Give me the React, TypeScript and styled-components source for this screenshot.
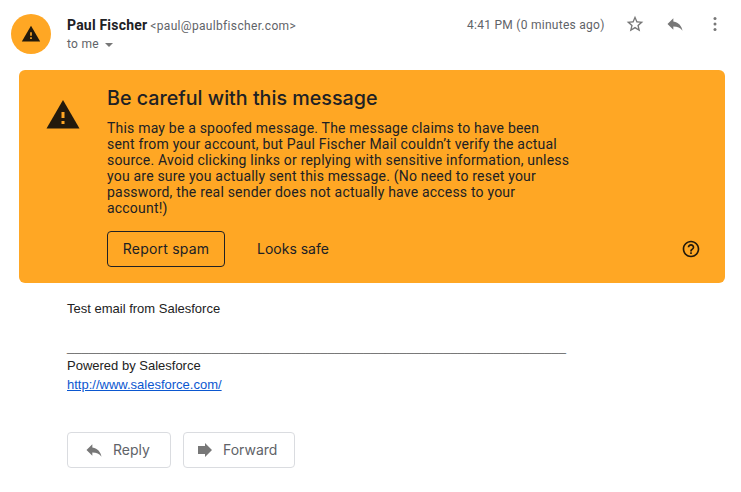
import styled, { createGlobalStyle } from 'styled-components';

const GlobalStyle = createGlobalStyle`
    html, body {
        margin: 0;
        background: #ffffff;
    }
`;

const Page = styled.div`
    width: 741px;
    height: 492px;
    overflow: hidden;
    padding-top: 14px;
    box-sizing: border-box;
    font-family: Roboto, 'Liberation Sans', sans-serif;
`;

const Header = styled.header`
    display: flex;
    height: 56px;
    padding-left: 11px;
`;

const Avatar = styled.div`
    width: 40px;
    height: 40px;
    border-radius: 50%;
    background: #ffa724;
    display: flex;
    align-items: center;
    justify-content: center;
    flex-shrink: 0;
`;

const Sender = styled.div`
    margin-left: 16px;
    width: 384px;
    padding-top: 2px;
`;

const SenderLine = styled.div`
    height: 18px;
    line-height: 18px;
    white-space: nowrap;
`;

const Name = styled.span`
    font-size: 14px;
    font-weight: 700;
    letter-spacing: 0.2px;
    color: #202124;
    margin-right: 3px;
`;

const Address = styled.span`
    font-size: 12px;
    letter-spacing: 0.33px;
    color: #5f6368;
`;

const ToLine = styled.div`
    display: flex;
    align-items: center;
    margin-top: 2px;
    height: 16px;
    font-size: 12px;
    letter-spacing: 0.3px;
    color: #5f6368;
`;

const Caret = styled.span`
    width: 0;
    height: 0;
    margin-left: 6px;
    margin-top: 1px;
    border-left: 4px solid transparent;
    border-right: 4px solid transparent;
    border-top: 4px solid #777777;
`;

const Meta = styled.div`
    margin-left: 16px;
    width: 148px;
    padding-top: 2px;
    font-size: 12px;
    letter-spacing: 0.27px;
    line-height: 18px;
    color: #5f6368;
    white-space: nowrap;
`;

const HeaderIcons = styled.div`
    display: flex;
    align-items: flex-start;
`;

const HeaderIcon = styled.div`
    width: 40px;
    height: 20px;
    display: flex;
    align-items: center;
    justify-content: center;
`;

const Banner = styled.section`
    margin-left: 19px;
    width: 706px;
    height: 213px;
    box-sizing: border-box;
    border-radius: 6px;
    background: #ffa724;
    display: flex;
    padding-top: 15px;
    color: #202124;
`;

const BannerIcon = styled.div`
    width: 88px;
    padding: 12px 0 0 26px;
    box-sizing: border-box;
    flex-shrink: 0;
`;

const BannerMain = styled.div`
    flex: 1;
    padding-right: 24px;
`;

const Title = styled.h2`
    margin: 0;
    font-family: 'Inter', sans-serif;
    font-size: 19.7px;
    font-weight: 500;
    line-height: 26px;
    color: #202124;
`;

const Message = styled.p`
    margin: 9px 0 0;
    font-size: 14px;
    letter-spacing: 0.2px;
    line-height: 16px;
    width: 463px;
    color: #202124;
`;

const BannerActions = styled.div`
    display: flex;
    align-items: center;
    margin-top: 15px;
`;

const SpamButton = styled.button`
    width: 118px;
    height: 36px;
    box-sizing: border-box;
    border: 1px solid #202124;
    border-radius: 4px;
    background: transparent;
    font-family: 'Inter', sans-serif;
    font-size: 14px;
    letter-spacing: 0.2px;
    color: #202124;
    padding: 0 0 1px;
`;

const SafeButton = styled.button`
    margin-left: 32px;
    border: 0;
    padding: 0 0 1px;
    background: transparent;
    font-family: 'Inter', sans-serif;
    font-size: 14px;
    color: #202124;
`;

const HelpIcon = styled.svg`
    display: block;
    margin-left: auto;
`;

const Body = styled.div`
    margin-left: 67px;
    padding-top: 18px;
    font-family: 'Liberation Sans', Arial, sans-serif;
    font-size: 13px;
    line-height: 15px;
    color: #222222;
`;

const Rule = styled.div`
    margin-top: 23px;
    color: #666666;
    white-space: nowrap;
`;

const Line = styled.div`
    margin-top: 4px;
`;

const SiteLink = styled.a`
    color: #0b57d0;
    text-decoration: underline;
`;

const Actions = styled.div`
    display: flex;
    gap: 12px;
    margin: 40px 0 0 67px;
`;

const ActionButton = styled.button<{ $wide?: boolean }>`
    display: flex;
    align-items: center;
    width: ${(p) => (p.$wide ? '112px' : '104px')};
    height: 36px;
    box-sizing: border-box;
    padding: 0 0 0 ${(p) => (p.$wide ? '12px' : '16px')};
    border: 1px solid #dadce0;
    border-radius: 4px;
    background: #ffffff;
    font-family: 'Inter', sans-serif;
    font-size: 14px;
    color: #5f6368;
`;

const ActionLabel = styled.span<{ $gap: number }>`
    margin-left: ${(p) => p.$gap}px;
    padding-bottom: 1px;
`;

const WarningIcon = ({ size }: { size: number }) => (
    <svg width={size} height={size} viewBox="0 0 24 24">
        <path d="M1 21h22L12 2 1 21z" fill="#231a0c" />
        <path d="M11 10h2v4h-2zM11 16h2v2h-2z" fill="#ffa724" />
    </svg>
);

const ReplyIcon = ({ size }: { size: number }) => (
    <svg width={size} height={size} viewBox="0 0 24 24">
        <path d="M10 9V5l-7 7 7 7v-4.1c5 0 8.5 1.6 11 5.1-1-5-4-10-11-11z" fill="#777777" />
    </svg>
);

const App = () => (
    <Page>
        <GlobalStyle />
        <Header>
            <Avatar>
                <WarningIcon size={20} />
            </Avatar>
            <Sender>
                <SenderLine>
                    <Name>Paul Fischer</Name>
                    <Address>&lt;paul@paulbfischer.com&gt;</Address>
                </SenderLine>
                <ToLine>
                    to me
                    <Caret />
                </ToLine>
            </Sender>
            <Meta>4:41 PM (0 minutes ago)</Meta>
            <HeaderIcons>
                <HeaderIcon>
                    <svg width="20" height="20" viewBox="0 0 24 24">
                        <path
                            d="M22 9.24l-7.19-.62L12 2 9.19 8.63 2 9.24l5.46 4.73L5.82 21 12 17.27 18.18 21l-1.63-7.03L22 9.24zM12 15.4l-3.76 2.27 1-4.28-3.32-2.88 4.38-.38L12 6.1l1.71 4.04 4.38.38-3.32 2.88 1 4.28L12 15.4z"
                            fill="#777777"
                        />
                    </svg>
                </HeaderIcon>
                <HeaderIcon>
                    <ReplyIcon size={20} />
                </HeaderIcon>
                <HeaderIcon>
                    <svg width="20" height="20" viewBox="0 0 24 24">
                        <circle cx="12" cy="5.5" r="1.8" fill="#777777" />
                        <circle cx="12" cy="12" r="1.8" fill="#777777" />
                        <circle cx="12" cy="18.5" r="1.8" fill="#777777" />
                    </svg>
                </HeaderIcon>
            </HeaderIcons>
        </Header>
        <Banner>
            <BannerIcon>
                <WarningIcon size={36} />
            </BannerIcon>
            <BannerMain>
                <Title>Be careful with this message</Title>
                <Message>
                    This may be a spoofed message. The message claims to have been sent from your
                    account, but Paul Fischer Mail couldn’t verify the actual source. Avoid clicking
                    links or replying with sensitive information, unless you are sure you actually
                    sent this message. (No need to reset your password, the real sender does not
                    actually have access to your account!)
                </Message>
                <BannerActions>
                    <SpamButton>Report spam</SpamButton>
                    <SafeButton>Looks safe</SafeButton>
                    <HelpIcon width="20" height="20" viewBox="0 0 24 24">
                        <path
                            d="M11 18h2v-2h-2v2zm1-16C6.48 2 2 6.48 2 12s4.48 10 10 10 10-4.48 10-10S17.52 2 12 2zm0 18c-4.41 0-8-3.59-8-8s3.59-8 8-8 8 3.59 8 8-3.59 8-8 8zm0-14c-2.21 0-4 1.79-4 4h2c0-1.1.9-2 2-2s2 .9 2 2c0 2-3 1.75-3 5h2c0-2.25 3-2.5 3-5 0-2.21-1.79-4-4-4z"
                            fill="#231a0c"
                        />
                    </HelpIcon>
                </BannerActions>
            </BannerMain>
        </Banner>
        <Body>
            <div>Test email from Salesforce</div>
            <Rule>{'_'.repeat(69)}</Rule>
            <Line>Powered by Salesforce</Line>
            <Line>
                <SiteLink href="#">http://www.salesforce.com/</SiteLink>
            </Line>
        </Body>
        <Actions>
            <ActionButton>
                <ReplyIcon size={20} />
                <ActionLabel $gap={9}>Reply</ActionLabel>
            </ActionButton>
            <ActionButton $wide>
                <svg width="20" height="20" viewBox="0 0 24 24">
                    <path d="M2.4 7.2h8.4V3.6l8.4 8.4-8.4 8.4v-3.6H2.4z" fill="#777777" />
                </svg>
                <ActionLabel $gap={7}>Forward</ActionLabel>
            </ActionButton>
        </Actions>
    </Page>
);

export default App;
